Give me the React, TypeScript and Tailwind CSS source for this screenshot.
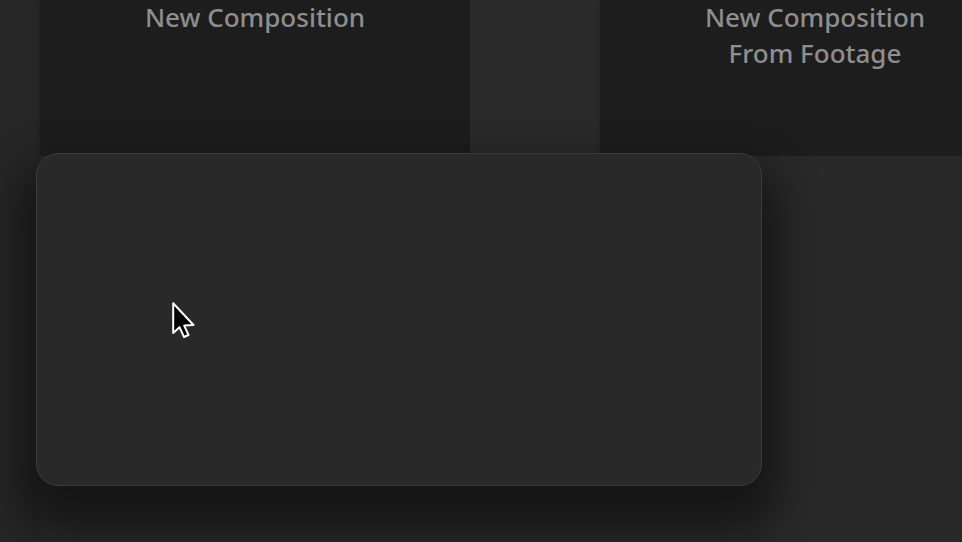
function Cursor() {
  return (
    <svg width="26" height="38" viewBox="0 0 26 38" className="absolute left-[172px] top-[302px]">
      <path
        d="M1.2 1.2 L1.2 31 L7.5 25.2 L12 35 L16.5 33 L12.2 23.6 L21.5 23 Z"
        fill="#000"
        stroke="#fff"
        strokeWidth="2"
        strokeLinejoin="round"
      />
    </svg>
  );
}

function Tile({ lines }: { lines: string[] }) {
  return (
    <div className="w-[430px] h-[156px] shrink-0 bg-[#1d1d1d] shadow-[0_2px_4px_rgba(0,0,0,0.25)] flex flex-col items-center">
      {lines.map((l) => (
        <p key={l} className="text-[26px] leading-[38px] text-[#8e8e8e] font-medium -mt-[2px]">
          {l}
        </p>
      ))}
    </div>
  );
}

export default function App() {
  return (
    <div
      className="relative w-[962px] h-[542px] overflow-hidden bg-[#262626]"
      style={{ fontFamily: '"Noto Sans", "Open Sans", sans-serif' }}
    >
      <div className="flex pl-[40px]">
        <Tile lines={["New Composition"]} />
        <div className="w-[130px] h-[156px] shrink-0 bg-[#2a2a2a]" />
        <Tile lines={["New Composition", "From Footage"]} />
      </div>
      <div className="flex h-[386px]">
        <div className="w-[40px] bg-[#262626]" />
        <div className="flex-1 bg-[#292929]" />
      </div>

      <div className="absolute left-[36px] top-[153px] w-[726px] h-[333px] rounded-[22px] border border-[#3b3b3b] bg-[#292929] shadow-[0_28px_40px_18px_rgba(0,0,0,0.45)]" />
      <Cursor />
    </div>
  );
}
